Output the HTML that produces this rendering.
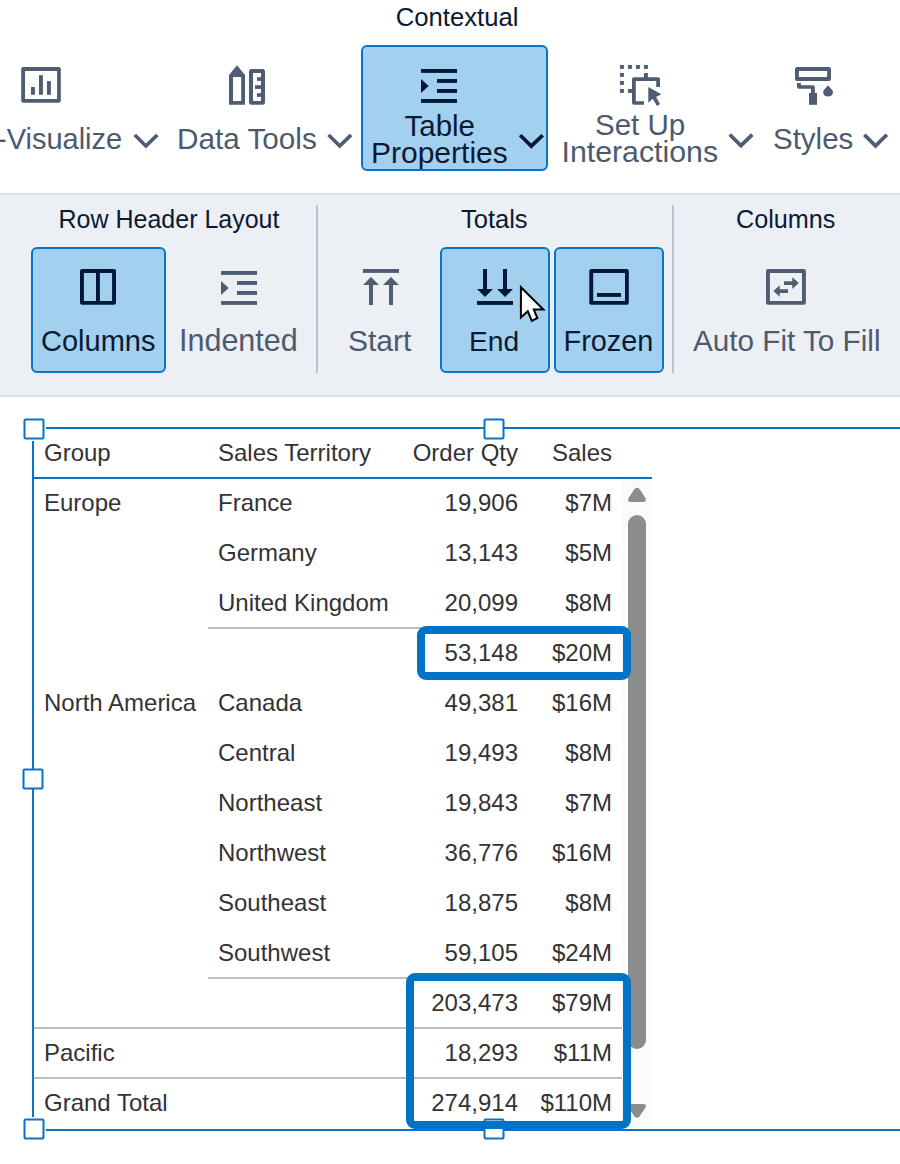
<!DOCTYPE html>
<html><head><meta charset="utf-8">
<style>
html,body{margin:0;padding:0;width:900px;height:1164px;overflow:hidden;background:#fff;}
body{position:relative;font-family:"Liberation Sans",sans-serif;}
.a{position:absolute;}
.t{position:absolute;white-space:nowrap;font-family:"Liberation Sans",sans-serif;}
.tb{color:#4d5a6e;font-size:29.5px;line-height:29.5px;}
.sel{color:#0b1a33;}
.rib{position:absolute;left:0;top:193px;width:900px;height:204px;background:#eceff3;box-sizing:border-box;border-top:2px solid #dcdfe9;border-bottom:2px solid #dcdfe9;}
.btn{position:absolute;box-sizing:border-box;background:#a3d0ef;border:2px solid #0a74c8;border-radius:6px;}
.sep{position:absolute;width:2px;background:#b6c3d5;}
.gl{font-size:25.5px;line-height:25.5px;color:#0b1a33;}
.bl{font-size:29.5px;line-height:29.5px;}
.tt{color:#333;font-size:24px;line-height:24px;}
.r{text-align:right;}
svg{position:absolute;left:0;top:0;}
</style></head><body>

<!-- top toolbar -->
<div class="t gl" style="left:395.7px;top:5.4px;font-size:25.7px;">Contextual</div>

<div class="btn" style="left:361px;top:45px;width:187px;height:126px;"></div>

<div class="t tb" style="left:-3px;top:125px;font-size:29px;">-Visualize</div>
<div class="t tb" style="left:177px;top:124px;font-size:29.7px;">Data Tools</div>
<div class="t tb sel" style="left:404.5px;top:110.5px;">Table</div>
<div class="t tb sel" style="left:371px;top:138px;font-size:30px;">Properties</div>
<div class="t tb" style="left:595px;top:110px;">Set Up</div>
<div class="t tb" style="left:561.5px;top:137px;font-size:30.3px;">Interactions</div>
<div class="t tb" style="left:773px;top:124px;">Styles</div>

<!-- ribbon -->
<div class="rib"></div>
<div class="t gl" style="left:58.5px;top:207px;font-size:25px;">Row Header Layout</div>
<div class="t gl" style="left:461px;top:207px;">Totals</div>
<div class="t gl" style="left:736px;top:207px;font-size:25.2px;">Columns</div>
<div class="sep" style="left:316px;top:205px;height:168px;"></div>
<div class="sep" style="left:672px;top:205px;height:168px;"></div>

<div class="btn" style="left:31px;top:247px;width:135px;height:126px;"></div>
<div class="btn" style="left:440px;top:247px;width:110px;height:126px;"></div>
<div class="btn" style="left:554px;top:247px;width:110px;height:126px;"></div>

<div class="t bl sel" style="left:41px;top:327px;font-size:29px;">Columns</div>
<div class="t bl tb" style="left:179px;top:326px;font-size:30.5px;">Indented</div>
<div class="t bl tb" style="left:348px;top:326px;font-size:30px;">Start</div>
<div class="t bl sel" style="left:469px;top:327px;font-size:28.2px;">End</div>
<div class="t bl sel" style="left:563.5px;top:327px;font-size:28.9px;">Frozen</div>
<div class="t bl tb" style="left:693px;top:326px;font-size:29.7px;">Auto Fit To Fill</div>

<!-- table -->
<div class="a" style="left:622px;top:479px;width:30px;height:649px;background:#fbfbfb;"></div>

<div class="t tt" style="left:44px;top:441px;">Group</div>
<div class="t tt" style="left:218px;top:441px;">Sales Territory</div>
<div class="t tt r" style="right:382px;top:441px;">Order Qty</div>
<div class="t tt r" style="right:288px;top:441px;">Sales</div>

<div class="t tt" style="left:44px;top:491px;">Europe</div>
<div class="t tt" style="left:218px;top:491px;">France</div>
<div class="t tt r" style="right:382px;top:491px;">19,906</div>
<div class="t tt r" style="right:288px;top:491px;">$7M</div>
<div class="t tt" style="left:218px;top:541px;">Germany</div>
<div class="t tt r" style="right:382px;top:541px;">13,143</div>
<div class="t tt r" style="right:288px;top:541px;">$5M</div>
<div class="t tt" style="left:218px;top:591px;">United Kingdom</div>
<div class="t tt r" style="right:382px;top:591px;">20,099</div>
<div class="t tt r" style="right:288px;top:591px;">$8M</div>
<div class="t tt r" style="right:382px;top:641px;">53,148</div>
<div class="t tt r" style="right:288px;top:641px;">$20M</div>
<div class="t tt" style="left:44px;top:691px;">North America</div>
<div class="t tt" style="left:218px;top:691px;">Canada</div>
<div class="t tt r" style="right:382px;top:691px;">49,381</div>
<div class="t tt r" style="right:288px;top:691px;">$16M</div>
<div class="t tt" style="left:218px;top:741px;">Central</div>
<div class="t tt r" style="right:382px;top:741px;">19,493</div>
<div class="t tt r" style="right:288px;top:741px;">$8M</div>
<div class="t tt" style="left:218px;top:791px;">Northeast</div>
<div class="t tt r" style="right:382px;top:791px;">19,843</div>
<div class="t tt r" style="right:288px;top:791px;">$7M</div>
<div class="t tt" style="left:218px;top:841px;">Northwest</div>
<div class="t tt r" style="right:382px;top:841px;">36,776</div>
<div class="t tt r" style="right:288px;top:841px;">$16M</div>
<div class="t tt" style="left:218px;top:891px;">Southeast</div>
<div class="t tt r" style="right:382px;top:891px;">18,875</div>
<div class="t tt r" style="right:288px;top:891px;">$8M</div>
<div class="t tt" style="left:218px;top:941px;">Southwest</div>
<div class="t tt r" style="right:382px;top:941px;">59,105</div>
<div class="t tt r" style="right:288px;top:941px;">$24M</div>
<div class="t tt r" style="right:382px;top:991px;">203,473</div>
<div class="t tt r" style="right:288px;top:991px;">$79M</div>
<div class="t tt" style="left:44px;top:1041px;">Pacific</div>
<div class="t tt r" style="right:382px;top:1041px;">18,293</div>
<div class="t tt r" style="right:288px;top:1041px;">$11M</div>
<div class="t tt" style="left:44px;top:1091px;">Grand Total</div>
<div class="t tt r" style="right:382px;top:1091px;">274,914</div>
<div class="t tt r" style="right:288px;top:1091px;">$110M</div>

<svg width="900" height="1164" viewBox="0 0 900 1164">
<defs>
<path id="chev" d="M0,2.4 L2.7,0 L12.5,9.7 L22.5,0 L25.2,2.6 L12.5,14.9 Z"/>
</defs>
<!-- toolbar icons -->
<g fill="#4f5d73">
<path fill-rule="evenodd" d="M23.2,67 H58.8 Q60.8,67 60.8,69 V100.7 Q60.8,102.7 58.8,102.7 H23.2 Q21.2,102.7 21.2,100.7 V69 Q21.2,67 23.2,67 Z M25,70.9 V99 H57.1 V70.9 Z"/>
<rect x="31" y="87" width="3.9" height="7.8"/>
<rect x="39" y="75.2" width="3.9" height="19.6"/>
<rect x="47" y="81.1" width="3.9" height="13.7"/>
<use href="#chev" x="133.4" y="133.7"/>

<path fill-rule="evenodd" d="M229,75 L237,65.3 L245,75 V104.8 H229 Z M233,77 V101 H241.2 V77 Z"/>
<path fill-rule="evenodd" d="M251.5,69 H262.5 Q265,69 265,71.5 V102.3 Q265,104.8 262.5,104.8 H251.5 Q249,104.8 249,102.3 V71.5 Q249,69 251.5,69 Z M253,73 V101 H261 V73 Z"/>
<rect x="257" y="77.2" width="4.5" height="3.7"/>
<rect x="255" y="85.2" width="6.5" height="3.7"/>
<rect x="257" y="93.2" width="4.5" height="3.7"/>
<use href="#chev" x="327.2" y="133.7"/>

<!-- set up interactions -->
<rect x="620" y="65" width="3.9" height="3.9"/><rect x="628" y="65" width="3.9" height="3.9"/>
<rect x="636" y="65" width="3.9" height="3.9"/><rect x="644" y="65" width="3.9" height="3.9"/>
<rect x="620" y="73" width="3.9" height="3.9"/><rect x="620" y="81" width="3.9" height="3.9"/>
<rect x="620" y="89" width="3.9" height="3.9"/>
<rect x="644" y="73" width="3.9" height="5"/><rect x="628" y="89" width="5" height="3.9"/>
<path d="M634,77.2 H658 Q660,77.2 660,79.2 V86.9 H656.2 V81 H635.8 V101.2 H644 V104.8 H634 Q632,104.8 632,102.8 V79.2 Q632,77.2 634,77.2 Z"/>
<path d="M648.3,87 L661.3,94.3 L656,97 L660,104 L657,106 L652.7,98.7 L648.3,102.7 Z"/>
<use href="#chev" x="728.4" y="133.3"/>

<!-- styles -->
<path fill-rule="evenodd" d="M797,67 H829 Q831,67 831,69 V79 Q831,81 829,81 H797 Q795,81 795,79 V69 Q795,67 797,67 Z M798.9,70.9 V77.1 H827.1 V70.9 Z"/>
<path d="M797,83 H800.9 V85.2 H813 Q814.8,85.2 814.8,87 V93 H811 V88.8 H799 Q797,88.8 797,86.8 Z"/>
<rect x="809" y="93" width="8" height="11.8"/>
<path d="M828,85.2 L831.5,89.3 Q833,91 833,92.2 A5,5 0 0 1 823.1,92.2 Q823.1,91 824.5,89.3 Z"/>
<use href="#chev" x="863" y="133.5"/>
</g>

<g fill="#001838">
<rect x="421" y="69" width="36" height="3.9"/>
<rect x="437" y="79" width="20" height="3.9"/>
<rect x="437" y="89" width="20" height="3.9"/>
<rect x="421" y="99" width="36" height="3.9"/>
<path d="M421,79 L428.7,86 L421,93 Z"/>
<use href="#chev" x="518.8" y="133.9"/>
</g>

<!-- ribbon icons -->
<g fill="#001838">
<path fill-rule="evenodd" d="M82,269 H114 Q116,269 116,271 V302.8 Q116,304.8 114,304.8 H82 Q80,304.8 80,302.8 V271 Q80,269 82,269 Z M83.9,272.9 V301 H96 V272.9 Z M99.9,272.9 V301 H112.1 V272.9 Z"/>
<rect x="477" y="301" width="36" height="3.9"/>
<rect x="483" y="269" width="4" height="21"/>
<rect x="503" y="269" width="4" height="21"/>
<path d="M477,289 H493 L485,297 Z M497,289 H513 L505,297 Z"/>
<path fill-rule="evenodd" d="M591.3,269 H626.8 Q628.8,269 628.8,271 V302.8 Q628.8,304.8 626.8,304.8 H591.3 Q589.3,304.8 589.3,302.8 V271 Q589.3,269 591.3,269 Z M593.2,272.9 V301 H625 V272.9 Z"/>
<rect x="597" y="293" width="24" height="3.9"/>
</g>
<g fill="#4f5d73">
<rect x="221" y="271" width="36" height="3.9"/>
<rect x="237" y="281" width="20" height="3.9"/>
<rect x="237" y="291" width="20" height="3.9"/>
<rect x="221" y="301" width="36" height="3.9"/>
<path d="M221,281 L228.7,288 L221,295 Z"/>
<rect x="363" y="269" width="36" height="3.9"/>
<rect x="369" y="284" width="4" height="21"/>
<rect x="389" y="284" width="4" height="21"/>
<path d="M363,285 H379 L371,277 Z M383,285 H399 L391,277 Z"/>
<path fill-rule="evenodd" d="M768,269 H803.9 Q805.9,269 805.9,271 V302.8 Q805.9,304.8 803.9,304.8 H768 Q766,304.8 766,302.8 V271 Q766,269 768,269 Z M769.9,273 V301 H802 V273 Z"/>
<path d="M784,281.2 H792.3 V277.2 L798.7,283 L792.3,288.9 V284.9 H784 Z"/>
<path d="M788,289.2 H779.7 V285.2 L773.5,291 L779.7,296.7 V292.9 H788 Z"/>
</g>
<!-- cursor -->
<path d="M520.9,287.2 V317.6 L527.8,311.3 L531.8,320.8 L537.4,318 L533.8,309.6 H543.4 Z" fill="#fff" stroke="#000" stroke-width="2" stroke-linejoin="miter"/>

<!-- table lines -->
<g fill="#bebebe">
<rect x="208" y="627" width="214" height="2"/>
<rect x="208" y="977" width="200" height="2"/>
<rect x="34" y="1027" width="588" height="2"/>
<rect x="34" y="1077" width="588" height="2"/>
</g>
<g fill="#0a73c8">
<rect x="46" y="427" width="854" height="2"/>
<rect x="46" y="1129" width="854" height="2"/>
<rect x="32" y="441" width="2" height="676"/>
<rect x="33" y="477" width="619" height="2"/>
</g>
<!-- scrollbar -->
<g fill="#8c8c8c">
<path d="M634.5,489 Q637,486.5 639.5,489 L645.5,498 Q647,502 643,502 H631 Q627,502 628.5,498 Z"/>
<path d="M628,524 A9,9 0 0 1 646,524 V1040 A9,9 0 0 1 628,1040 Z"/>
<path d="M634.5,1116.5 Q637,1119 639.5,1116.5 L645.5,1107.5 Q647,1104 643,1104 H631 Q627,1104 628.5,1107.5 Z"/>
</g>
<!-- handles -->
<g fill="#fff" stroke="#0a73c8" stroke-width="2">
<rect x="24.5" y="419.5" width="19" height="19" rx="1"/>
<rect x="484.5" y="419.5" width="19" height="19" rx="1"/>
<rect x="23.5" y="769.5" width="19" height="19" rx="1"/>
<rect x="24.5" y="1119.5" width="19" height="19" rx="1"/>
<rect x="484.5" y="1119.5" width="19" height="19" rx="1"/>
</g>
<!-- highlight boxes -->
<g fill="none" stroke="#0073c6" stroke-width="8">
<rect x="421" y="630" width="206" height="46" rx="5"/>
<rect x="410" y="977" width="217" height="148" rx="5"/>
</g>

</svg>

</body></html>
